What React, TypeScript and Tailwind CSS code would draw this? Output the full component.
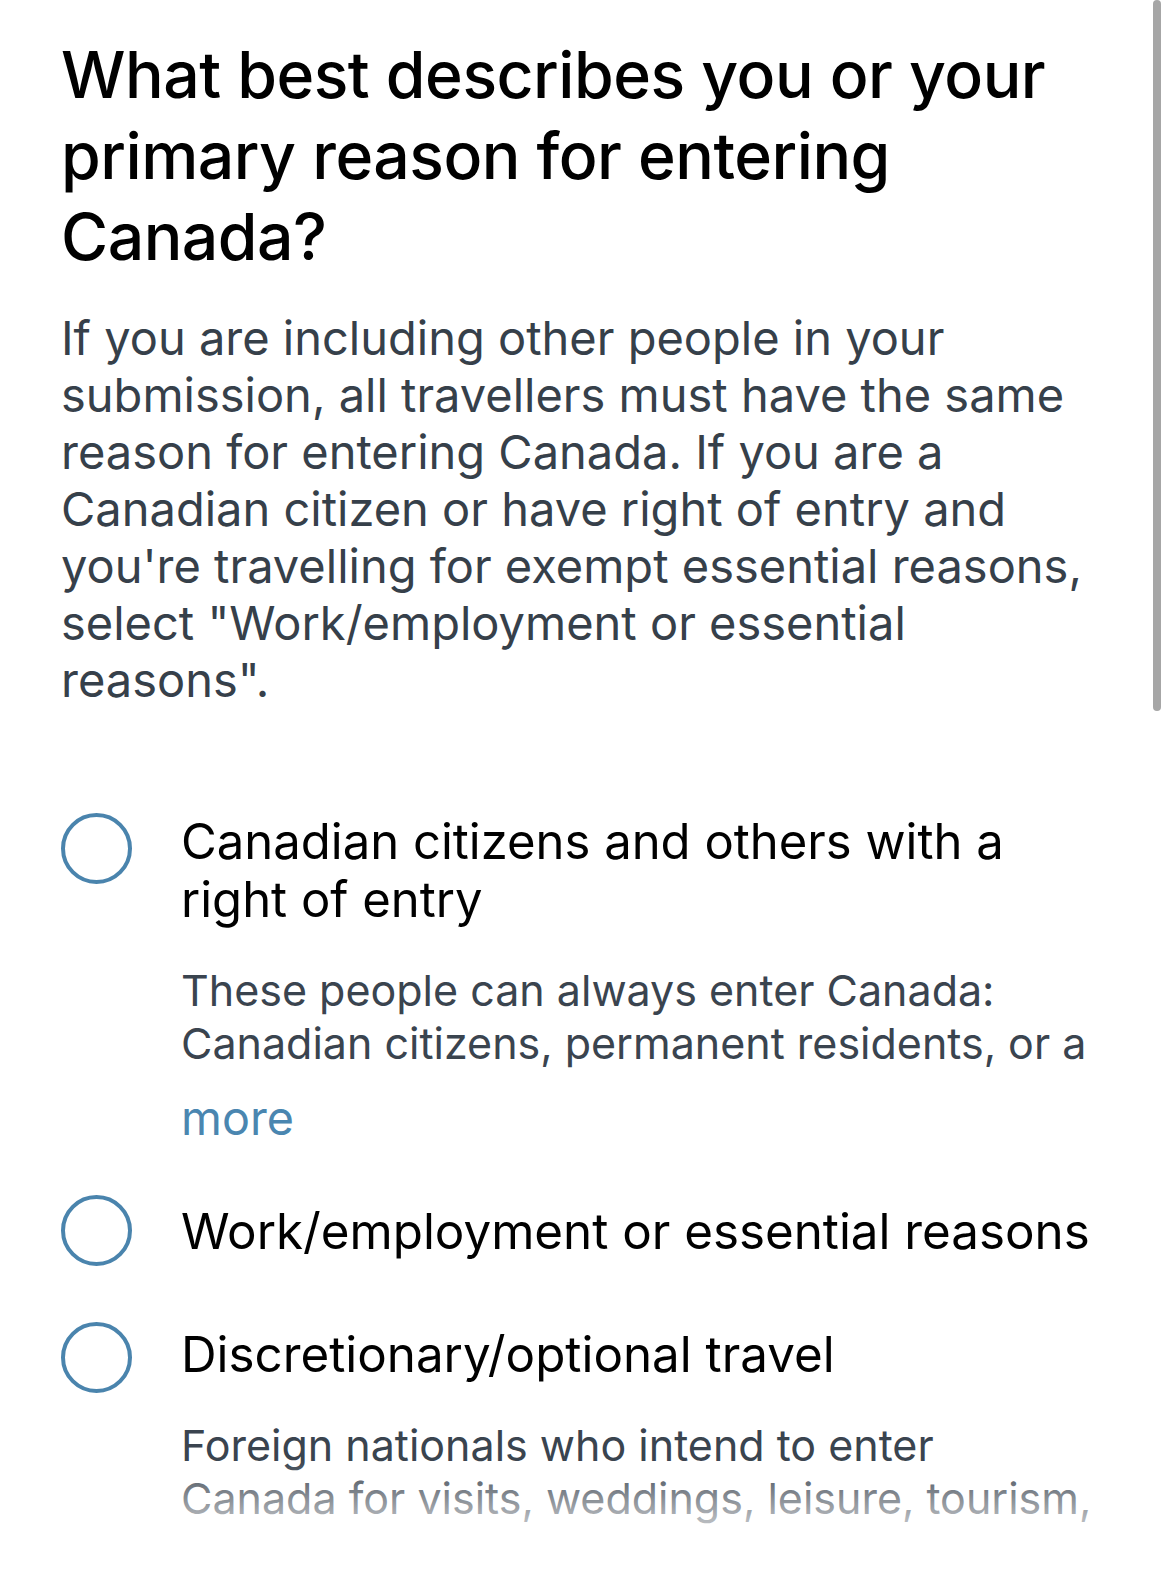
import React from "react";

function Radio() {
  return (
    <div className="w-[71px] h-[71px] rounded-full border-[4px] border-[#4a84ad] shrink-0" />
  );
}

export default function App() {
  return (
    <div
      className="relative w-[1170px] h-[1575px] overflow-hidden bg-white"
      style={{ fontFamily: "Inter, 'Noto Sans', sans-serif" }}
    >
      <div className="pl-[61px] pr-[56px] pt-[35px]">
        <h1 className="text-[64.3px] leading-[81px] font-medium text-black tracking-[-0.5px]">
          What best describes you or your primary reason for entering Canada?
        </h1>
        <p className="mt-[31px] text-[47px] leading-[57px] text-[#36404a]">
          If you are including other people in your submission, all travellers must have the same reason for entering Canada. If you are a Canadian citizen or have right of entry and you're travelling for exempt essential reasons, select "Work/employment or essential reasons".
        </p>

        <div className="mt-[95px] flex flex-col">
          <div className="flex gap-[49px]">
            <div className="mt-[10px]"><Radio /></div>
            <div className="flex flex-col">
              <div className="mt-[10px] text-[49px] leading-[58px] text-black">
                Canadian citizens and others with a<br />right of entry
              </div>
              <div className="mt-[35px] text-[43px] leading-[53px] text-[#3a444f]">
                These people can always enter Canada:<br />Canadian citizens, permanent residents, or a
              </div>
              <div className="mt-[22px] text-[46.7px] leading-[53px] text-[#4a86b0]">more</div>
            </div>
          </div>

          <div className="mt-[50px] flex gap-[49px] items-center">
            <Radio />
            <div className="text-[49.3px] leading-[58px] text-black whitespace-nowrap">
              Work/employment or essential reasons
            </div>
          </div>

          <div className="mt-[59px] flex gap-[49px]">
            <div className="mt-[-3px]"><Radio /></div>
            <div className="flex flex-col">
              <div className="text-[49.3px] leading-[58px] text-black">
                Discretionary/optional travel
              </div>
              <div className="mt-[36px] text-[43px] leading-[53px] text-[#3a444f]">
                Foreign nationals who intend to enter<br />Canada for visits, weddings, leisure, tourism,
              </div>
            </div>
          </div>
        </div>
      </div>

      <div className="absolute left-0 right-0 bottom-0 h-[115px] bg-gradient-to-b from-white/0 via-white/60 to-white" />
      <div className="absolute right-[9px] top-0 w-[8px] h-[711px] rounded-full bg-[#a6a6a6]" />
    </div>
  );
}
